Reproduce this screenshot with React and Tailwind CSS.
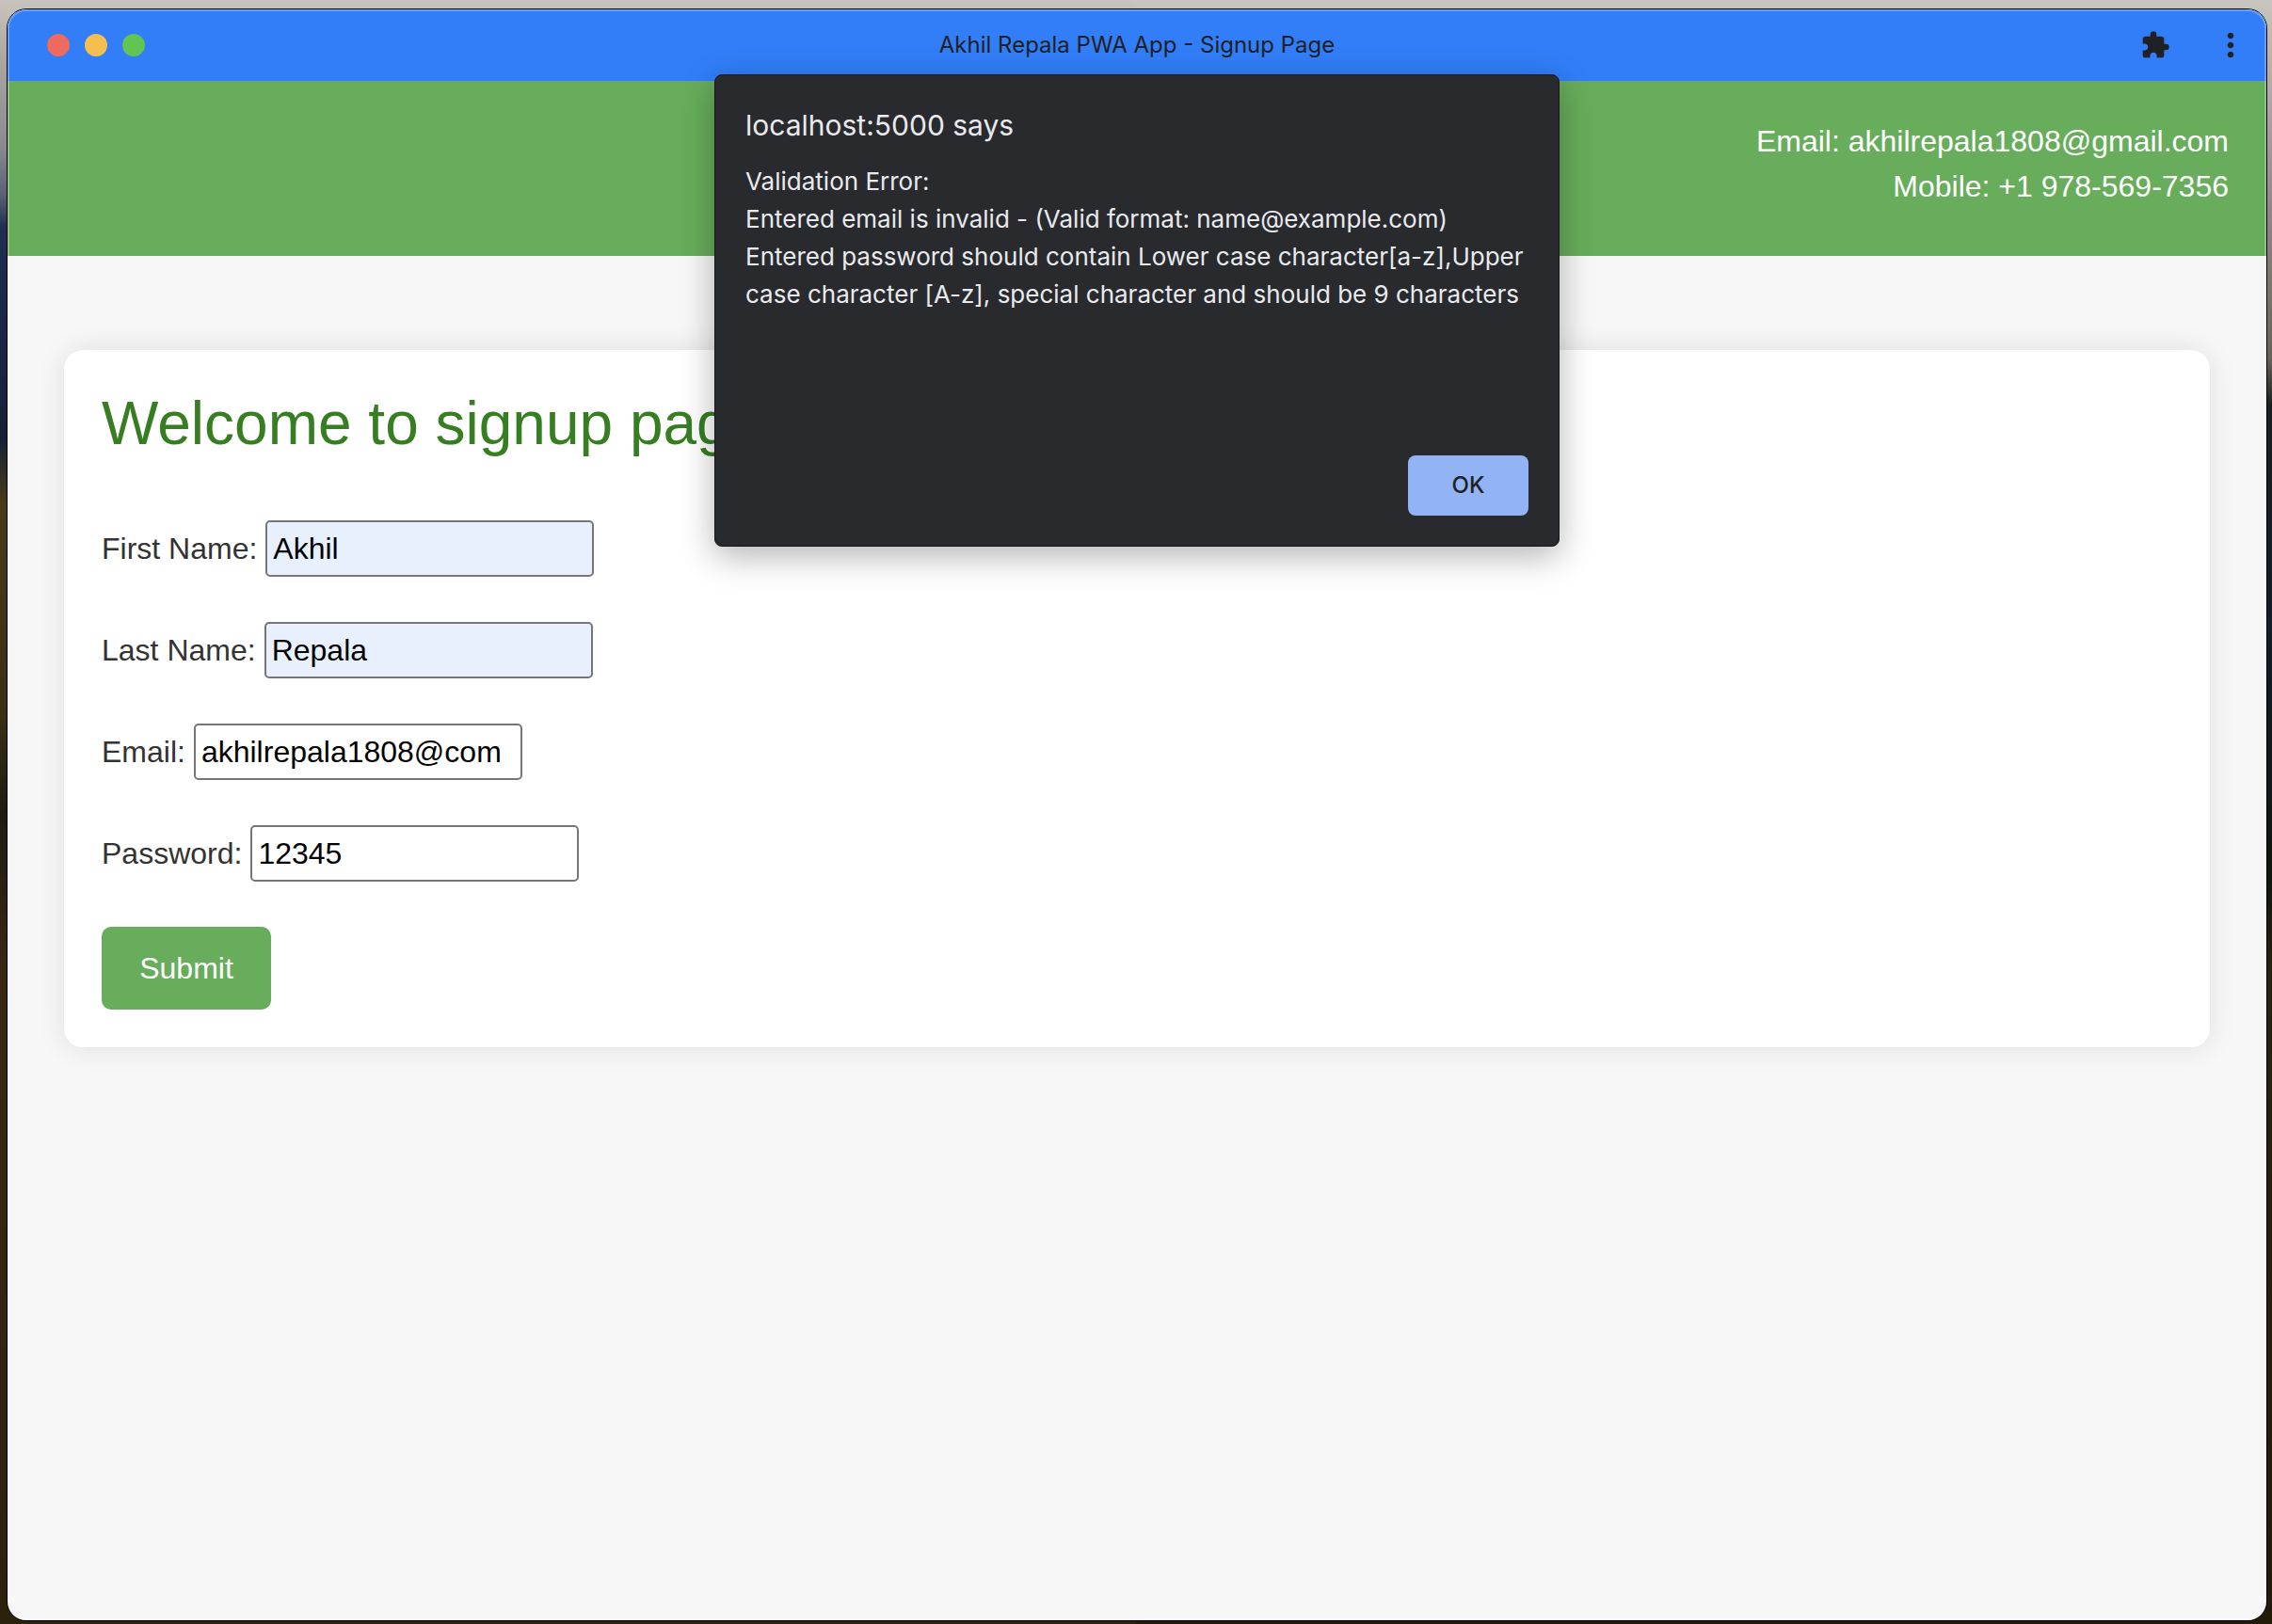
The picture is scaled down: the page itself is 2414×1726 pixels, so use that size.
import React from "react";
import { MdExtension, MdMoreVert } from "react-icons/md";

function Field({ id, label, value, type = "text", filled = false }) {
  return (
    <div className="flex items-center gap-[9px]">
      <label htmlFor={id} className="text-[32px] leading-[48px] text-[#333333]">
        {label}
      </label>
      <input
        id={id}
        type={type}
        defaultValue={value}
        className={
          "h-[60px] w-[349px] rounded-[5px] border-2 border-[#767676] px-[6px] text-[32px] text-black outline-none " +
          (filled ? "bg-[#e8f0fe]" : "bg-white")
        }
      />
    </div>
  );
}

function TitleBar() {
  return (
    <div className="flex h-[76px] items-center rounded-t-[20px] bg-[#317ef8] px-[18px] text-[#202124]">
      <div className="flex flex-1 basis-0 items-center gap-4">
        <button aria-label="Close" className="ml-6 size-6 rounded-full bg-[#ed6a5e]" />
        <button aria-label="Minimize" className="size-6 rounded-full bg-[#f5bf4f]" />
        <button aria-label="Zoom" className="size-6 rounded-full bg-[#61c554]" />
      </div>
      <div className="font-['Inter'] text-[24px]">Akhil Repala PWA App - Signup Page</div>
      <div className="flex flex-1 basis-0 items-center justify-end gap-11">
        <button aria-label="Extensions">
          <MdExtension className="size-8" />
        </button>
        <button aria-label="More options">
          <MdMoreVert className="size-10" />
        </button>
      </div>
    </div>
  );
}

function AlertDialog() {
  return (
    <div
      role="alertdialog"
      aria-labelledby="alert-title"
      aria-describedby="alert-text"
      className="absolute top-[69px] left-1/2 flex min-h-[502px] w-[898px] -translate-x-1/2 flex-col rounded-[8px] border border-[#16171a] bg-[#292a2d] px-8 pt-8 pb-8 font-['Inter'] text-[#e8eaed] shadow-[0_10px_36px_rgba(0,0,0,0.3)]"
    >
      <h2 id="alert-title" className="text-[30px] leading-[42px]">
        localhost:5000 says
      </h2>
      <p id="alert-text" className="mt-[19px] text-[26px] leading-[40px] whitespace-nowrap">
        Validation Error:
        <br />
        Entered email is invalid - (Valid format: name@example.com)
        <br />
        Entered password should contain Lower case character[a-z],Upper
        <br />
        case character [A-z], special character and should be 9 characters
      </p>
      <button className="mt-auto h-16 w-32 self-end rounded-[8px] bg-[#92b3f4] text-[24px] font-medium text-[#202124]">
        OK
      </button>
    </div>
  );
}

export default function App() {
  return (
    <div className="flex min-h-screen flex-col [background:linear-gradient(to_bottom,#c8c5be_0%,#a8a49d_4%,#8a8b92_9%,#5a6175_12%,#1f2f52_14%,#152038_27%,#4a3b18_31%,#3a3014_44%,#1d1c12_50%,#3a2812_60%,#2c220c_100%)_left/50%_100%_no-repeat,linear-gradient(to_bottom,#c8c5be_0%,#948d84_12%,#6b625a_22%,#1a1f20_25%,#121c2c_38%,#10160f_54%,#2a2210_60%,#231a0a_100%)_right/50%_100%_no-repeat] pt-[10px] pr-[6px] pb-1 pl-2">
      <div className="relative flex flex-1 flex-col rounded-[20px] bg-[#f7f7f7] font-['Liberation_Sans',Arial,sans-serif] shadow-[0_0_0_1px_#000]">
        <TitleBar />
        <header className="h-[186px] bg-[#67ad5b] px-10 pt-10 text-right text-[32px] leading-[48px] text-white">
          <p>Email: akhilrepala1808@gmail.com</p>
          <p>Mobile: +1 978-569-7356</p>
        </header>
        <main className="px-[60px] pt-[100px]">
          <form
            onSubmit={(e) => e.preventDefault()}
            className="flex flex-col items-start gap-12 rounded-[20px] bg-white p-10 shadow-[0_0_30px_rgba(0,0,0,0.1)]"
          >
            <h1 className="mb-[17px] text-[64px] leading-[76px] text-[#377e22]">Welcome to signup page</h1>
            <Field id="first" label="First Name:" value="Akhil" filled />
            <Field id="last" label="Last Name:" value="Repala" filled />
            <Field id="email" label="Email:" value="akhilrepala1808@com" />
            <Field id="password" label="Password:" value="12345" />
            <button type="submit" className="h-[88px] w-[180px] rounded-[10px] bg-[#67ad5b] text-[32px] text-white">
              Submit
            </button>
          </form>
        </main>
        <div className="pointer-events-none absolute inset-0 rounded-[20px] border-2 border-white/25" />
        <AlertDialog />
      </div>
    </div>
  );
}
